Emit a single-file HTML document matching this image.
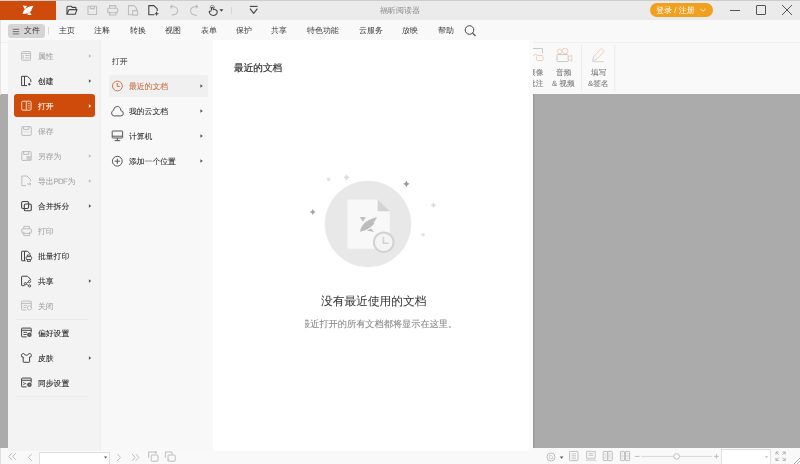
<!DOCTYPE html>
<html><head><meta charset="utf-8">
<style>
*{margin:0;padding:0;box-sizing:border-box}
html,body{width:800px;height:464px;overflow:hidden;background:#f9f9fa;font-family:"Liberation Sans",sans-serif;color:#333}
.abs{position:absolute}
svg{position:absolute;overflow:visible}
.t{position:absolute;white-space:nowrap;line-height:1;will-change:transform;-webkit-text-stroke-width:0.08px;text-rendering:geometricPrecision}
</style></head><body>
<div class="abs" style="left:0;top:0;width:800px;height:19.5px;background:#ebebeb;border-top:1px solid #cdcdcd"></div>
<div class="abs" style="left:0;top:1px;width:56px;height:18.5px;background:#cf4b0b"></div>
<div class="abs" style="left:0;top:94px;width:800px;height:353.5px;background:#ababab"></div>
<div class="abs" style="left:533px;top:94px;width:2px;height:353.5px;background:linear-gradient(to right,#979797,#a8a8a8)"></div>
<div class="abs" style="left:0;top:41.5px;width:800px;height:1px;background:#f0f0f2"></div>
<div class="abs" style="left:0;top:19.5px;width:1px;height:75px;background:#e4e4e4"></div>
<div class="abs" style="left:0;top:447.5px;width:800px;height:16.5px;background:#f9f9fa;border-left:1px solid #e0e0e0"></div>
<svg width="800" height="20" style="left:0;top:0">
<path fill="#fff" d="M22.7 5.6 L27.2 6 L24.8 9.2 Z M22.6 14.1 C23.2 10 27 6.4 33.3 5.8 C32.8 7.6 32.2 8.6 31.3 9.4 L31.8 9.9 C30.2 12.4 27 13.8 22.6 14.1 Z M27.2 13.7 L30 12.3 L31.6 15 L28 15 Z"/>
</svg>
<div class="t" style="left:380.4px;top:6.8px;font-size:8px;color:#8a8a8a;-webkit-text-stroke-width:0">福昕阅读器</div>
<div class="abs" style="left:650px;top:3px;width:63px;height:14px;border-radius:7px;background:#f0a01e"></div>
<div class="t" style="left:656.3px;top:7px;font-size:8px;color:#fff;-webkit-text-stroke-width:0">登录 / 注册</div>
<svg style="left:0;top:0" width="800" height="20">
<path d="M700.5 9 L703 11.2 L705.5 9" fill="none" stroke="#fff" stroke-width="0.8"/>
<path d="M730 10.5 H740" stroke="#555" stroke-width="1"/>
<rect x="756.5" y="5.5" width="9" height="9" rx="0.5" fill="none" stroke="#555" stroke-width="1"/>
<path d="M782 5 L792 15 M792 5 L782 15" stroke="#555" stroke-width="1"/>
</svg>
<svg style="left:0;top:0" width="300" height="20" fill="none" stroke-width="1.1" stroke-linejoin="round">
<!-- open folder -->
<path d="M67 14.2 V7.2 Q67 6.2 68 6.2 H71 L72.2 7.4 H75.2 Q76 7.4 76 8.2 V9.4" stroke="#444"/>
<path d="M67 14.2 L69 9.6 H77 L75.2 14.2 Z" stroke="#444"/>
<!-- save -->
<rect x="88" y="6.2" width="8.6" height="8.3" stroke="#bdbdbd"/>
<path d="M90.3 6.2 V8.6 H94.3 V6.2" stroke="#bdbdbd"/>
<!-- print -->
<path d="M109.5 8.2 V5.6 H115.8 V8.2" stroke="#bdbdbd"/>
<rect x="107.7" y="8.2" width="10" height="4.6" rx="1" stroke="#bdbdbd"/>
<path d="M109.5 11.4 V15 H115.8 V11.4" stroke="#bdbdbd"/>
<!-- doc with file -->
<path d="M134 5.6 H128.5 V14.8 H132" stroke="#bdbdbd"/>
<path d="M134 5.6 L136.6 8.3 V10.3" stroke="#bdbdbd"/>
<rect x="132.6" y="10.6" width="5" height="4.5" stroke="#bdbdbd"/>
<!-- new doc -->
<path d="M154 5.6 H148.8 V14.8 H154.4" stroke="#444"/>
<path d="M154 5.6 L157.2 8.8 V11" stroke="#444"/>
<path d="M156.6 11.8 V15.6 M154.7 13.7 H158.5" stroke="#444"/>
<!-- undo -->
<path d="M171.2 6.6 Q177.6 6.2 177.6 10.6 Q177.6 15 171.6 15" stroke="#bdbdbd"/>
<path d="M170.2 6.6 L172.4 5.2 M170.2 6.6 L172.4 8.2" stroke="#bdbdbd"/>
<!-- redo -->
<path d="M197.2 6.6 Q190.6 6.2 190.6 10.8 Q190.6 15.4 196.8 15.4" stroke="#bdbdbd"/>
<path d="M197.8 6.6 L196 5 M197.8 6.6 L195.8 8.2" stroke="#bdbdbd"/>
<!-- hand -->
<path d="M210 8.4 Q210.2 5.2 212.3 5.2 Q214.4 5.2 214.6 8.4" stroke="#8a8a8a" stroke-width="0.9"/>
<path d="M211.4 10.6 V7.8 Q212.3 6.6 213.2 7.8 V9.8" stroke="#444"/>
<path d="M213.2 9.6 Q215.8 9.4 216.9 10.6 Q217.5 11.8 216.9 13.4 Q215.9 15.5 213.2 15.5 Q210.6 15.5 209.7 13.4 L209.2 11.6 Q209.8 10.6 211.4 11.2" stroke="#444"/>
<path d="M219.4 9.2 H223.4 L221.4 11.8 Z" fill="#444" stroke="none"/>
<!-- separator -->
<path d="M231.5 7 V14" stroke="#d6d6d6" stroke-width="1"/>
<!-- dropdown -->
<path d="M249.8 6.4 H257.6" stroke="#444"/>
<path d="M250 8.6 L253.7 13.4 L257.4 8.6" stroke="#444"/>
</svg>
<div class="abs" style="left:7.5px;top:23.5px;width:37px;height:14px;border-radius:3px;background:#d5d5d5"></div>
<svg style="left:0;top:0" width="800" height="42">
<path d="M12.8 29.3 H19.2 M12.8 31.6 H19.2 M12.8 33.9 H19.2" stroke="#5a5a5a" stroke-width="0.8"/>
<path d="M48.5 27 V34.5" stroke="#d8d8d8" stroke-width="1"/>
<circle cx="469.5" cy="30" r="4.3" fill="none" stroke="#444" stroke-width="1"/>
<path d="M472.6 33.1 L475.5 36" stroke="#444" stroke-width="1.1"/>
</svg>
<div class="t" style="left:24px;top:27px;font-size:7.95px;color:#383838;-webkit-text-stroke-width:0">文件</div>
<div class="t" style="left:58.5px;top:27px;font-size:7.95px;color:#383838;-webkit-text-stroke-width:0">主页</div>
<div class="t" style="left:94px;top:27px;font-size:7.95px;color:#383838;-webkit-text-stroke-width:0">注释</div>
<div class="t" style="left:129.5px;top:27px;font-size:7.95px;color:#383838;-webkit-text-stroke-width:0">转换</div>
<div class="t" style="left:165px;top:27px;font-size:7.95px;color:#383838;-webkit-text-stroke-width:0">视图</div>
<div class="t" style="left:200.5px;top:27px;font-size:7.95px;color:#383838;-webkit-text-stroke-width:0">表单</div>
<div class="t" style="left:235.5px;top:27px;font-size:7.95px;color:#383838;-webkit-text-stroke-width:0">保护</div>
<div class="t" style="left:271px;top:27px;font-size:7.95px;color:#383838;-webkit-text-stroke-width:0">共享</div>
<div class="t" style="left:306.5px;top:27px;font-size:7.95px;color:#383838;-webkit-text-stroke-width:0">特色功能</div>
<div class="t" style="left:359px;top:27px;font-size:7.95px;color:#383838;-webkit-text-stroke-width:0">云服务</div>
<div class="t" style="left:401.5px;top:27px;font-size:7.95px;color:#383838;-webkit-text-stroke-width:0">放映</div>
<div class="t" style="left:437.5px;top:27px;font-size:7.95px;color:#383838;-webkit-text-stroke-width:0">帮助</div>
<svg style="left:0;top:0" width="800" height="100" fill="none" stroke-width="1">
<path d="M581.6 45 V92 M614.8 45 V92" stroke="#ececec"/>
<!-- partial icon -->
<path d="M533 48.5 H542.5 V53" stroke="#c8c8c8"/>
<path d="M533 56 Q535 53 537 55" stroke="#f0cdb9"/>
<rect x="536.5" y="55.5" width="6.5" height="5" rx="1" stroke="#f0cdb9"/>
<!-- camera -->
<circle cx="559.8" cy="51.4" r="2.4" stroke="#f0cdb9"/>
<circle cx="565.2" cy="51" r="2.8" stroke="#f0cdb9"/>
<rect x="557" y="54.6" width="11.2" height="7" rx="0.6" stroke="#c8c8c8"/>
<path d="M568.2 57 L571.8 55.2 V61 L568.2 59.2" stroke="#f0cdb9"/>
<!-- pencil -->
<path d="M593.6 56.8 L600.6 49 Q601.4 48.2 602.2 49 L603.6 50.4 Q604.4 51.2 603.6 52 L596.4 59.6" stroke="#f0cdb9"/>
<path d="M593.6 56.8 L592.6 60.4 L596.4 59.6" stroke="#cfcfcf"/>
<path d="M592.2 61.6 H603.6" stroke="#d4d4d4"/>
</svg>
<div class="t" style="left:527.8px;top:68.5px;font-size:7.7px;color:#7a7a7a;">摄像</div>
<div class="t" style="left:527.8px;top:79.5px;font-size:7.7px;color:#7a7a7a;">批注</div>
<div class="t" style="left:556.3px;top:68.5px;font-size:7.7px;color:#7a7a7a;">音频</div>
<div class="t" style="left:552px;top:79.5px;font-size:7.7px;color:#7a7a7a;">&amp; 视频</div>
<div class="t" style="left:591px;top:68.5px;font-size:7.7px;color:#7a7a7a;">填写</div>
<div class="t" style="left:588px;top:79.5px;font-size:7.7px;color:#7a7a7a;">&amp;签名</div>
<div class="abs" style="left:8px;top:39.5px;width:93px;height:411.5px;background:linear-gradient(to right,#f3f3f3 0,#f3f3f3 91px,#ececec 93px)"></div>
<div class="abs" style="left:101px;top:39.5px;width:112px;height:411.5px;background:#f8f8f8"></div>
<div class="abs" style="left:213px;top:39.5px;width:320px;height:411.5px;background:linear-gradient(to right,#fff 0,#fff 316px,#fbfbfb 316px)"></div>
<div class="abs" style="left:14px;top:94.3px;width:80.8px;height:22.4px;border-radius:3px;background:#cf4b0b"></div>
<div class="t" style="left:37.5px;top:53px;font-size:7.8px;color:#a4a4a4;">属性</div>
<svg style="left:0;top:0" width="100" height="464"><path d="M88.9 54.2 L91.2 56 L88.9 57.8 Z" fill="#bdbdbd"/></svg>
<div class="t" style="left:37.5px;top:78px;font-size:7.8px;color:#2a2a2a;">创建</div>
<svg style="left:0;top:0" width="100" height="464"><path d="M88.9 79.2 L91.2 81 L88.9 82.8 Z" fill="#555"/></svg>
<div class="t" style="left:37.5px;top:103px;font-size:7.8px;color:#fff;">打开</div>
<svg style="left:0;top:0" width="100" height="464"><path d="M88.9 104.2 L91.2 106 L88.9 107.8 Z" fill="#fff"/></svg>
<div class="t" style="left:37.5px;top:128px;font-size:7.8px;color:#a4a4a4;">保存</div>
<div class="t" style="left:37.5px;top:153px;font-size:7.8px;color:#a4a4a4;">另存为</div>
<svg style="left:0;top:0" width="100" height="464"><path d="M88.9 154.2 L91.2 156 L88.9 157.8 Z" fill="#bdbdbd"/></svg>
<div class="t" style="left:37.5px;top:178px;font-size:7.8px;color:#a4a4a4;">导出<span style="letter-spacing:-0.75px">PDF</span><span style="margin-left:0.6px">为</span></div>
<svg style="left:0;top:0" width="100" height="464"><path d="M88.9 179.2 L91.2 181 L88.9 182.8 Z" fill="#bdbdbd"/></svg>
<div class="t" style="left:37.5px;top:203px;font-size:7.8px;color:#2a2a2a;">合并拆分</div>
<svg style="left:0;top:0" width="100" height="464"><path d="M88.9 204.2 L91.2 206 L88.9 207.8 Z" fill="#555"/></svg>
<div class="t" style="left:37.5px;top:228px;font-size:7.8px;color:#a4a4a4;">打印</div>
<div class="t" style="left:37.5px;top:253px;font-size:7.8px;color:#2a2a2a;">批量打印</div>
<div class="t" style="left:37.5px;top:278px;font-size:7.8px;color:#2a2a2a;">共享</div>
<svg style="left:0;top:0" width="100" height="464"><path d="M88.9 279.2 L91.2 281 L88.9 282.8 Z" fill="#555"/></svg>
<div class="t" style="left:37.5px;top:303px;font-size:7.8px;color:#a4a4a4;">关闭</div>
<div class="t" style="left:37.5px;top:330px;font-size:7.8px;color:#2a2a2a;">偏好设置</div>
<div class="t" style="left:37.5px;top:355px;font-size:7.8px;color:#2a2a2a;">皮肤</div>
<svg style="left:0;top:0" width="100" height="464"><path d="M88.9 356.2 L91.2 358 L88.9 359.8 Z" fill="#555"/></svg>
<div class="t" style="left:37.5px;top:380px;font-size:7.8px;color:#2a2a2a;">同步设置</div>
<div class="abs" style="left:15.5px;top:319px;width:72px;height:1px;background:#eaeaea"></div>
<div class="abs" style="left:15.5px;top:396px;width:72px;height:1px;background:#eaeaea"></div>
<svg style="left:0;top:0" width="100" height="464" fill="none" stroke-width="1" stroke-linejoin="round">
<!-- 属性 -->
<rect x="21.6" y="51.6" width="9" height="8.6" rx="0.8" stroke="#bcbcbc"/>
<path d="M21.6 53.5 H30.6 M25 55.5 H29.6 M25 57.9 H29.6 M23.3 55 V58.6" stroke="#bcbcbc" stroke-width="0.9"/>
<!-- 创建 -->
<path d="M27.4 76.3 H21.6 V85.6 H27" stroke="#444"/>
<path d="M24.5 76.3 V85.6" stroke="#444"/>
<path d="M27.4 76.3 L30.8 79.6 V82.2" stroke="#444"/>
<path d="M29.3 83 V85.6 M28 84.3 H30.6" stroke="#444" stroke-width="1.1"/>
<!-- 打开 -->
<rect x="21.7" y="101.2" width="9.4" height="9" rx="1.2" stroke="#f9d8c6"/>
<path d="M26.3 101.2 V110.2" stroke="#f9d8c6"/>
<path d="M27.9 103.6 H29.7 M27.9 105.7 H29.7 M27.9 107.8 H29.7" stroke="#f9d8c6" stroke-width="0.8"/>
<!-- 保存 -->
<rect x="21.8" y="126.6" width="9.4" height="8.8" rx="0.6" stroke="#bcbcbc"/>
<path d="M23.6 126.6 V129.4 H28.8 V126.6" stroke="#bcbcbc"/>
<path d="M23.4 131.8 H29.6" stroke="#d8d8d8" stroke-width="0.8"/>
<!-- 另存为 -->
<rect x="21.8" y="151.6" width="9.4" height="8.8" rx="0.6" stroke="#bcbcbc"/>
<path d="M23.6 151.6 V154.4 H28.8 V151.6" stroke="#bcbcbc"/>
<rect x="26.4" y="156" width="4.8" height="4.4" fill="#cdcdcd" stroke="none"/>
<!-- 导出PDF为 -->
<path d="M27 176 H21.8 V185.6 H26" stroke="#bcbcbc"/>
<path d="M27 176 L30.4 179.4 V181.4" stroke="#bcbcbc"/>
<path d="M27 184 H31 M29.6 182.6 L31 184 L29.6 185.4" stroke="#bcbcbc"/>
<!-- 合并拆分 -->
<rect x="21.6" y="201.5" width="7" height="7" rx="1.4" stroke="#444" stroke-width="1.1"/>
<rect x="24.3" y="204" width="7" height="6.8" rx="1.4" stroke="#444" stroke-width="1.1"/>
<!-- 打印 -->
<path d="M23.8 228.8 V226.4 H29.4 V228.8" stroke="#bcbcbc"/>
<rect x="21.8" y="228.8" width="9.6" height="4.6" rx="1.2" stroke="#bcbcbc"/>
<path d="M23.8 231.6 V235.6 H29.4 V231.6" stroke="#bcbcbc"/>
<!-- 批量打印 -->
<path d="M25.6 260.8 H22.1 Q21.6 260.8 21.6 260.3 V251.7 Q21.6 251.2 22.1 251.2 H27.4 L30.4 254.2" stroke="#444"/>
<path d="M24.5 251.2 V260.8" stroke="#444"/>
<rect x="26.2" y="256.6" width="5.4" height="3" rx="0.8" stroke="#444" stroke-width="0.9"/>
<path d="M27.4 256.6 V255 H30.4 V256.6 M27.4 259.6 V261.4 H30.4 V259.6" stroke="#444" stroke-width="0.9"/>
<!-- 共享 -->
<path d="M24.6 285.6 H22.1 Q21.6 285.6 21.6 285.1 V276.7 Q21.6 276.2 22.1 276.2 H27.5 L30.4 279.1 V280" stroke="#444"/>
<circle cx="29.5" cy="281.5" r="1.1" stroke="#444" stroke-width="0.9"/>
<circle cx="25.3" cy="283.7" r="1.1" stroke="#444" stroke-width="0.9"/>
<circle cx="29.6" cy="285.9" r="1.1" stroke="#444" stroke-width="0.9"/>
<path d="M28.5 282 L26.3 283.2 M26.3 284.2 L28.6 285.4" stroke="#444" stroke-width="0.8"/>
<!-- 关闭 -->
<path d="M31.2 307.6 V301.6 Q31.2 301.1 30.7 301.1 H22.1 Q21.6 301.1 21.6 301.6 V309.5 Q21.6 310 22.1 310 H26.4 M21.6 303.4 H31.2" stroke="#bcbcbc"/>
<path d="M23.4 305.4 H27 M23.4 307.5 H26.6" stroke="#bcbcbc" stroke-width="0.9"/>
<circle cx="29.4" cy="307.9" r="2.1" stroke="#bcbcbc" stroke-width="0.9"/>
<!-- 偏好设置 -->
<path d="M31.2 332.6 V328.6 Q31.2 328.1 30.7 328.1 H22.1 Q21.6 328.1 21.6 328.6 V336.4 Q21.6 336.9 22.1 336.9 H26.6 M21.6 330.3 H31.2" stroke="#444"/>
<path d="M23.4 332.4 H27 M23.4 334.5 H26.8" stroke="#444" stroke-width="0.9"/>
<circle cx="29.4" cy="334.8" r="2.3" fill="#5a5a5a" stroke="none"/>
<circle cx="29.4" cy="334.8" r="0.7" fill="#999" stroke="none"/>
<!-- 皮肤 -->
<path d="M23.7 353.5 Q26.4 357 29.1 353.5 L30.7 354 Q31.6 354.4 31.4 355.4 L30.9 357 L29.6 357 V361.8 Q29.6 362.3 29.1 362.3 H23.7 Q23.2 362.3 23.2 361.8 V357 L21.9 357 L21.4 355.4 Q21.2 354.4 22.1 354 Z" stroke="#444"/>
<!-- 同步设置 -->
<path d="M31.2 382.6 V378.6 Q31.2 378.1 30.7 378.1 H22.1 Q21.6 378.1 21.6 378.6 V386.4 Q21.6 386.9 22.1 386.9 H26.6 M21.6 380.3 H31.2" stroke="#444"/>
<path d="M23.3 385.2 L25.2 383.1 L26.4 384.3" stroke="#444" stroke-width="0.9"/>
<circle cx="23.8" cy="382.6" r="0.6" fill="#444" stroke="none"/>
<circle cx="29.4" cy="384.8" r="2.3" fill="#5a5a5a" stroke="none"/>
<circle cx="29.4" cy="384.8" r="0.7" fill="#999" stroke="none"/>
</svg>
<div class="t" style="left:111.8px;top:57.6px;font-size:7.7px;color:#4a4a4a;">打开</div>
<div class="abs" style="left:108.6px;top:75.3px;width:99.4px;height:21.6px;border-radius:2px;background:#f0f0f0"></div>
<div class="t" style="left:129.2px;top:83px;font-size:7.8px;color:#c87043;">最近的文档</div>
<svg style="left:0;top:0" width="220" height="464"><path d="M200.4 84.2 L202.8 86 L200.4 87.8 Z" fill="#555"/></svg>
<div class="t" style="left:129.2px;top:108px;font-size:7.8px;color:#333;">我的云文档</div>
<svg style="left:0;top:0" width="220" height="464"><path d="M200.4 109.2 L202.8 111 L200.4 112.8 Z" fill="#555"/></svg>
<div class="t" style="left:129.2px;top:133px;font-size:7.8px;color:#333;">计算机</div>
<svg style="left:0;top:0" width="220" height="464"><path d="M200.4 134.2 L202.8 136 L200.4 137.8 Z" fill="#555"/></svg>
<div class="t" style="left:129.2px;top:158px;font-size:7.8px;color:#333;">添加一个位置</div>
<svg style="left:0;top:0" width="220" height="464"><path d="M200.4 159.2 L202.8 161 L200.4 162.8 Z" fill="#555"/></svg>
<svg style="left:0;top:0" width="220" height="464" fill="none" stroke-width="1">
<circle cx="117.4" cy="86" r="4.9" stroke="#cc7345" stroke-width="1"/>
<path d="M117.2 83 V86.4 H119.8" stroke="#cc7345" stroke-width="1"/>
<path d="M114.2 115.9 H120.8 Q123.3 115.9 123.3 113.3 Q123.3 110.9 120.9 110.7 Q120.4 106.4 117.3 106.4 Q113.9 106.4 113.5 110.3 Q111.6 110.9 111.6 113.2 Q111.6 115.9 114.2 115.9 Z" stroke="#555"/>
<rect x="112.2" y="131" width="10.4" height="7" rx="0.5" stroke="#555"/>
<path d="M112.2 136.2 H122.6 M117.4 138 V140.4 M114.6 140.6 H120.2" stroke="#555"/>
<circle cx="117.3" cy="161.2" r="4.9" stroke="#555"/>
<path d="M117.3 158.6 V163.8 M114.7 161.2 H119.9" stroke="#555"/>
</svg>
<div class="t" style="left:233.5px;top:63.7px;font-size:9.65px;color:#2a2a2a;-webkit-text-stroke-width:0.18px">最近的文档</div>
<svg style="left:0;top:0" width="800" height="464">
<circle cx="368" cy="224" r="43.3" fill="#e8e8e8"/>
<path d="M349.5 199.4 H377.7 L389.8 211.2 V246.8 Q389.8 248.8 387.8 248.8 H349.5 Q347.5 248.8 347.5 246.8 V201.4 Q347.5 199.4 349.5 199.4 Z" fill="#f8f8f8"/>
<path d="M377.7 199.4 V211.2 H389.8 Z" fill="#d3d3d3"/>
<g fill="#bcbcbc"><path d="M359.8 216.9 L366 217.3 L362.8 221.6 Z"/><path d="M360 231.8 C361 225 366.5 219.3 377 217.2 C375.8 219.6 374.8 221.2 373.6 222.5 L374.4 223.2 C372 226.6 368 229.8 360 231.8 Z"/><path d="M366.8 230.6 L371 228.4 L374 232 Z"/></g>
<circle cx="383.7" cy="242.2" r="9.8" fill="#f4f4f4" stroke="#d2d2d2" stroke-width="2"/>
<path d="M383.4 237 V243.2 H388.6" fill="none" stroke="#d2d2d2" stroke-width="1.6"/>
<circle cx="328.6" cy="179.2" r="1.8" fill="#e2e2e2"/>
<circle cx="423.1" cy="234.7" r="1.8" fill="#e4e4e4"/>
<path d="M346.6 174.3 Q347.1 177.0 349.8 177.5 Q347.1 178.0 346.6 180.7 Q346.1 178.0 343.40000000000003 177.5 Q346.1 177.0 346.6 174.3 Z" fill="#dcdcdc"/>
<path d="M406.4 180.4 Q407.0 183.20000000000002 409.79999999999995 183.8 Q407.0 184.4 406.4 187.20000000000002 Q405.79999999999995 184.4 403.0 183.8 Q405.79999999999995 183.20000000000002 406.4 180.4 Z" fill="#9a9a9a"/>
<path d="M312.7 209.0 Q313.3 211.4 315.7 212 Q313.3 212.6 312.7 215.0 Q312.09999999999997 212.6 309.7 212 Q312.09999999999997 211.4 312.7 209.0 Z" fill="#a0a0a0"/>
<path d="M433.4 202.10000000000002 Q433.9 204.8 436.59999999999997 205.3 Q433.9 205.8 433.4 208.5 Q432.9 205.8 430.2 205.3 Q432.9 204.8 433.4 202.10000000000002 Z" fill="#dedede"/>
</svg>
<div class="t" style="left:321px;top:295.8px;font-size:11.72px;color:#3a3a3a;-webkit-text-stroke-width:0.05px">没有最近使用的文档</div>
<div class="abs" style="left:305px;top:312px;width:160px;height:24px;overflow:hidden">
<div class="t" style="left:-3.8px;top:8.3px;font-size:9.2px;color:#888;">最近打开的所有文档都将显示在这里。</div>
</div>
<div class="abs" style="left:39px;top:451.6px;width:70.8px;height:13px;background:#fff;border:1px solid #e0e0e0;border-bottom:none"></div>
<div class="abs" style="left:721.3px;top:449.3px;width:50px;height:15px;background:#fff;border:1px solid #e2e2e2;border-bottom:none"></div>
<svg style="left:0;top:0" width="800" height="464" fill="none" stroke-width="1">
<path d="M12 453.2 L8.8 456.5 L12 459.8 M15.8 453.2 L12.6 456.5 L15.8 459.8" stroke="#bdbdbd"/>
<path d="M31.8 454 L28.4 457.4 L31.8 460.8" stroke="#bdbdbd"/>
<path d="M104 456.4 H107.2 L105.6 458.4 Z" fill="#555" stroke="none"/>
<path d="M117.2 454 L120.6 457.4 L117.2 460.8" stroke="#bdbdbd"/>
<path d="M132 454 L135.2 457.4 L132 460.8 M135.8 454 L139 457.4 L135.8 460.8" stroke="#bdbdbd"/>
<path d="M148.6 457.8 V452 H154.6" stroke="#bdbdbd"/>
<rect x="151.2" y="455" width="6.8" height="6.2" rx="0.6" stroke="#bdbdbd" fill="#f9f9fa"/>
<path d="M154.4 452.2 L157 452.2 M155.8 451 V454" stroke="#bdbdbd" stroke-width="0.9"/>
<path d="M165.4 457.8 V452 H172 V454.6" stroke="#bdbdbd"/>
<rect x="168" y="455" width="7.2" height="6.2" rx="0.6" stroke="#bdbdbd" fill="#f9f9fa"/>
<path d="M167.6 460.4 L169.6 459" stroke="#bdbdbd" stroke-width="0.9"/>
<circle cx="551" cy="457" r="4" stroke="#bdbdbd"/>
<path d="M549.4 458.6 V455.6 L551.4 455.6 L552.6 456.8 V458.6 Z" stroke="#bdbdbd" stroke-width="0.7"/>
<path d="M559.8 456.4 H563.4 L561.6 458.8 Z" fill="#555" stroke="none"/>
<rect x="569.6" y="451.4" width="8.4" height="9.2" rx="0.6" stroke="#bdbdbd"/>
<path d="M571.6 453.8 H576 M571.6 455.4 H576 M571.6 457 H576 M571.6 458.6 H576" stroke="#bdbdbd" stroke-width="0.7"/>
<path d="M586.6 458.2 V451.4 H595.2 V458.2 Z M588.6 453.6 H593.2 M588.6 455.4 H593.2 M586.6 461 V460 H595.2 V461" stroke="#bdbdbd" stroke-width="0.9"/>
<rect x="603.2" y="451.4" width="4.4" height="9.2" rx="0.6" stroke="#bdbdbd"/>
<rect x="607.8" y="451.4" width="4.4" height="9.2" rx="0.6" stroke="#bdbdbd"/>
<path d="M604.6 454 H606.2 M604.6 456 H606.2 M604.6 458 H606.2 M609.2 454 H610.8 M609.2 456 H610.8 M609.2 458 H610.8" stroke="#bdbdbd" stroke-width="0.7"/>
<rect x="620.4" y="451.4" width="4.2" height="9.2" rx="0.5" stroke="#bdbdbd"/>
<rect x="625.4" y="451.4" width="4.2" height="9.2" rx="0.5" stroke="#bdbdbd"/>
<path d="M620.4 456 H624.6 M625.4 456 H629.6 M621.6 453.6 H623.4 M626.6 453.6 H628.4 M621.6 458.4 H623.4 M626.6 458.4 H628.4" stroke="#bdbdbd" stroke-width="0.7"/>
<path d="M634.8 456.4 H639.6" stroke="#bdbdbd"/>
<path d="M641.6 456.4 H712" stroke="#d6d6d6"/>
<circle cx="676.6" cy="456.4" r="2.8" fill="#fff" stroke="#bdbdbd"/>
<path d="M714 456.4 H718.8 M716.4 454 V458.8" stroke="#bdbdbd"/>
<path d="M764.8 456 H768.4 L766.6 458 Z" fill="#c8c8c8" stroke="none"/>
<path d="M776 454.6 V452 H778.6 M776 452 L778.8 454.8 M785.2 454.6 V452 H782.6 M785.2 452 L782.4 454.8 M776 457.8 V460.4 H778.6 M776 460.4 L778.8 457.6 M785.2 457.8 V460.4 H782.6 M785.2 460.4 L782.4 457.6" stroke="#aaa" stroke-width="0.9"/>
<path d="M794 464 L800 458 M797 464 L800 461" stroke="#9a9a9a" stroke-width="0.8"/>
</svg>
</body></html>
